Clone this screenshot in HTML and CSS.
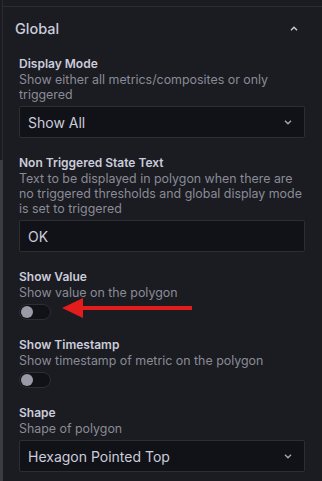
FILE: index.html
```html
<!DOCTYPE html>
<html>
<head>
<meta charset="utf-8">
<link rel="stylesheet" href="styles.css">
</head>
<body>
<div class="frame">
  <div class="track">
    <div class="track-line"></div>
    <div class="thumb"></div>
  </div>
  <div class="main">
    <div class="panel">
      <div class="header">
        <span class="title">Global</span>
        <svg class="chev-up" width="8" height="5" viewBox="0 0 8 5"><path d="M1 4.2 L4 1.2 L7 4.2" fill="none" stroke="#ccccdc" stroke-width="1.4"/></svg>
      </div>
      <div class="body">
        <div class="field">
          <div class="label">Display Mode</div>
          <div class="desc">Show either all metrics/composites or only triggered</div>
          <div class="input select"><span>Show All</span>
            <svg width="8" height="5" viewBox="0 0 8 5"><path d="M1 0.8 L4 3.8 L7 0.8" fill="none" stroke="#a8a8b4" stroke-width="1.4"/></svg>
          </div>
        </div>
        <div class="field">
          <div class="label">Non Triggered State Text</div>
          <div class="desc">Text to be displayed in polygon when there are no triggered thresholds and global display mode is set to triggered</div>
          <div class="input"><span>OK</span></div>
        </div>
        <div class="field">
          <div class="label">Show Value</div>
          <div class="desc">Show value on the polygon</div>
          <div class="toggle"><span class="knob"></span></div>
        </div>
        <div class="field">
          <div class="label">Show Timestamp</div>
          <div class="desc">Show timestamp of metric on the polygon</div>
          <div class="toggle"><span class="knob"></span></div>
        </div>
        <div class="field">
          <div class="label">Shape</div>
          <div class="desc">Shape of polygon</div>
          <div class="input select"><span>Hexagon Pointed Top</span>
            <svg width="8" height="5" viewBox="0 0 8 5"><path d="M1 0.8 L4 3.8 L7 0.8" fill="none" stroke="#a8a8b4" stroke-width="1.4"/></svg>
          </div>
        </div>
      </div>
    </div>
  </div>
</div>
<svg class="arrow" width="140" height="24" viewBox="0 0 140 24"><path d="M20 10 L130 10 L130 14 L20 14 Z" fill="#e31c1c"/><path d="M0 12 L21 2 L21 22 Z" fill="#e31c1c"/></svg>
</body>
</html>
```
FILE: styles.css
```css
html, body {
  margin: 0;
  padding: 0;
  background: #1a1c21;
}
body {
  width: 322px;
  height: 481px;
  overflow: hidden;
  position: relative;
  font-family: Inter, "Noto Sans", sans-serif;
  color: #ccccdc;
}
.frame {
  display: flex;
  height: 481px;
}
.track {
  width: 3px;
  display: flex;
  flex-direction: column;
}
.track-line {
  flex: 0 0 160px;
  border-right: 1px solid #2a2c31;
  box-sizing: border-box;
}
.thumb {
  flex: 1;
  background: #3a3c42;
}
.main {
  flex: 1;
  padding-top: 6px;
}
.panel {
  border-top: 1px solid #2a2c31;
}
.header {
  height: 42px;
  display: flex;
  align-items: center;
  justify-content: space-between;
  padding: 0 24px 0 12px;
}
.title {
  font-size: 14.5px;
  font-weight: 500;
}
.body {
  padding: 6px 17px 0 16px;
}
.field {
  margin-bottom: 16px;
}
.label {
  font-size: 12px;
  font-weight: 600;
  line-height: 17px;
  color: #ccccdc;
}
.desc {
  font-size: 12.4px;
  line-height: 15px;
  color: #8b8b97;
}
.input {
  margin-top: 4px;
  height: 32px;
  box-sizing: border-box;
  border: 1px solid #2c2e34;
  border-radius: 2px;
  background: #111217;
  display: flex;
  align-items: center;
  justify-content: space-between;
  padding: 0 12px 0 8px;
  font-size: 14px;
  color: #ccccdc;
}
.toggle {
  margin-top: 4px;
  width: 32px;
  height: 16px;
  box-sizing: border-box;
  border: 1px solid #2c2e34;
  border-radius: 8px;
  background: #111217;
  display: flex;
  align-items: center;
  padding-left: 1px;
}
.knob {
  width: 12px;
  height: 12px;
  border-radius: 50%;
  background: #9b9ba8;
}
.arrow {
  position: absolute;
  left: 62px;
  top: 296px;
}
```
